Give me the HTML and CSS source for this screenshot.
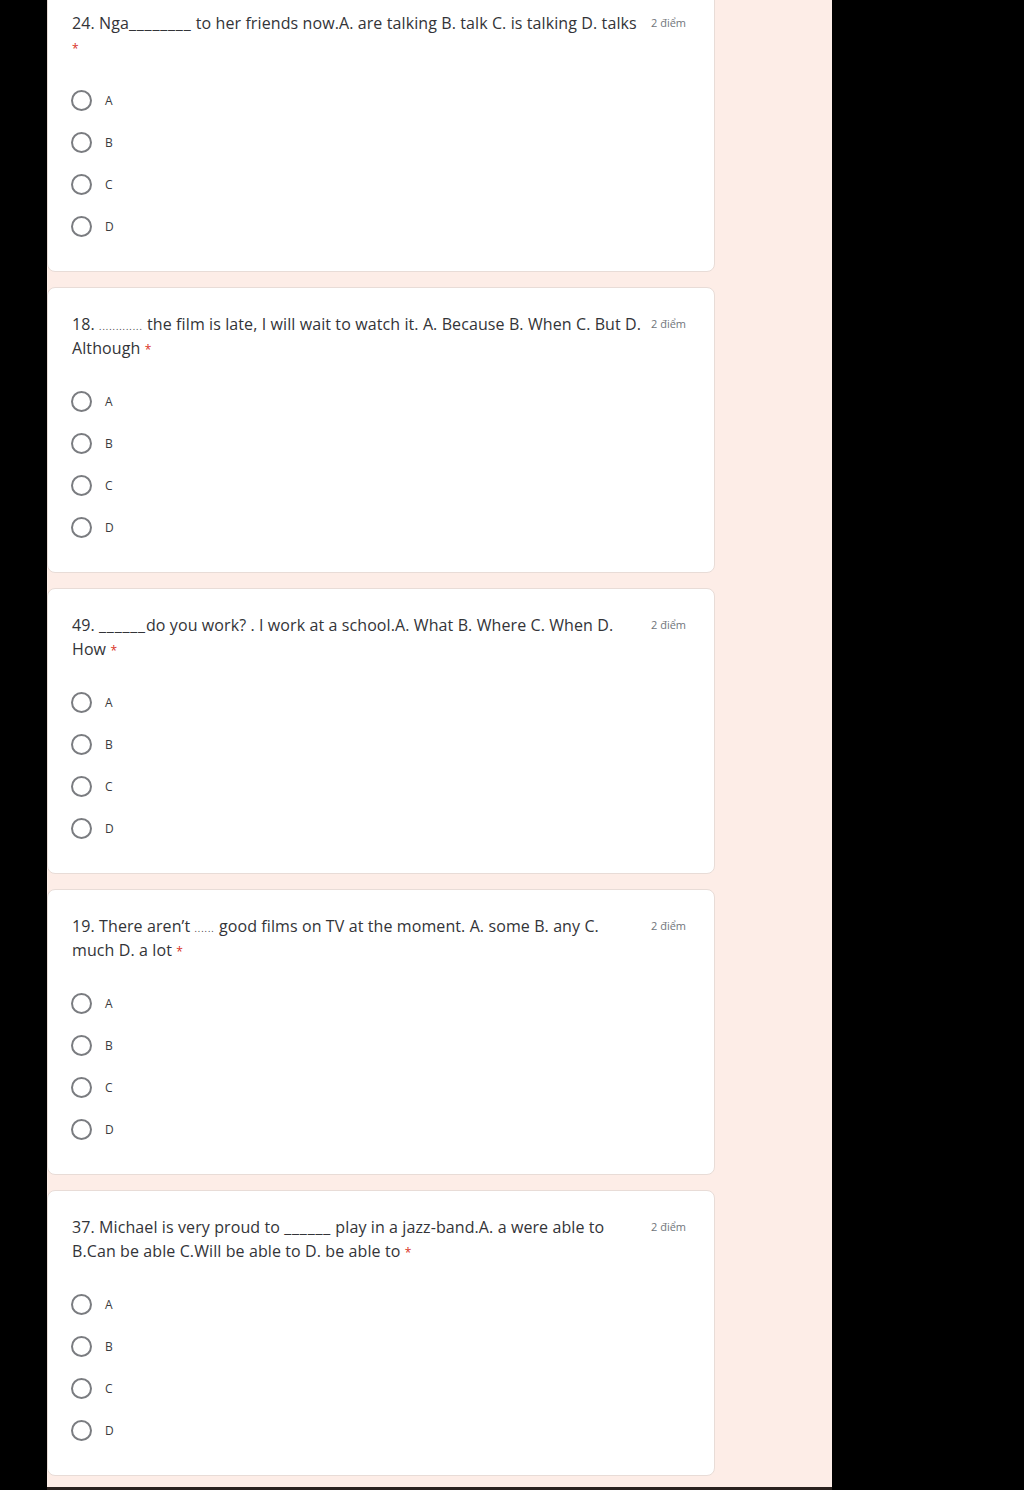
FILE: index.html
```html
<!DOCTYPE html>
<html lang="vi">
<head>
<meta charset="utf-8">
<title>Form</title>
<link rel="stylesheet" href="styles.css">
</head>
<body>
<div class="frame">
  <main class="page">
    <div class="list">
      <section class="card">
        <div class="head">
          <div class="title">24. Nga<span class="blank">________</span> to her friends now.A. are talking B. talk C. is talking D. talks<br><span class="req">*</span></div>
          <div class="pts">2 điểm</div>
        </div>
        <div class="opts">
          <label class="opt"><span class="radio"></span><span class="lbl">A</span></label>
          <label class="opt"><span class="radio"></span><span class="lbl">B</span></label>
          <label class="opt"><span class="radio"></span><span class="lbl">C</span></label>
          <label class="opt"><span class="radio"></span><span class="lbl">D</span></label>
        </div>
      </section>
      <section class="card">
        <div class="head">
          <div class="title">18. <span class="dots">.............</span> the film is late, I will wait to watch it. A. Because B. When C. But D.<br>Although <span class="req">*</span></div>
          <div class="pts">2 điểm</div>
        </div>
        <div class="opts">
          <label class="opt"><span class="radio"></span><span class="lbl">A</span></label>
          <label class="opt"><span class="radio"></span><span class="lbl">B</span></label>
          <label class="opt"><span class="radio"></span><span class="lbl">C</span></label>
          <label class="opt"><span class="radio"></span><span class="lbl">D</span></label>
        </div>
      </section>
      <section class="card">
        <div class="head">
          <div class="title">49. <span class="blank">______</span>do you work? . I work at a school.A. What B. Where C. When D.<br>How <span class="req">*</span></div>
          <div class="pts">2 điểm</div>
        </div>
        <div class="opts">
          <label class="opt"><span class="radio"></span><span class="lbl">A</span></label>
          <label class="opt"><span class="radio"></span><span class="lbl">B</span></label>
          <label class="opt"><span class="radio"></span><span class="lbl">C</span></label>
          <label class="opt"><span class="radio"></span><span class="lbl">D</span></label>
        </div>
      </section>
      <section class="card">
        <div class="head">
          <div class="title">19. There aren’t <span class="dots">......</span> good films on TV at the moment. A. some B. any C.<br>much D. a lot <span class="req">*</span></div>
          <div class="pts">2 điểm</div>
        </div>
        <div class="opts">
          <label class="opt"><span class="radio"></span><span class="lbl">A</span></label>
          <label class="opt"><span class="radio"></span><span class="lbl">B</span></label>
          <label class="opt"><span class="radio"></span><span class="lbl">C</span></label>
          <label class="opt"><span class="radio"></span><span class="lbl">D</span></label>
        </div>
      </section>
      <section class="card">
        <div class="head">
          <div class="title">37. Michael is very proud to <span class="blank">______</span> play in a jazz-band.A. a were able to<br>B.Can be able C.Will be able to D. be able to <span class="req">*</span></div>
          <div class="pts">2 điểm</div>
        </div>
        <div class="opts">
          <label class="opt"><span class="radio"></span><span class="lbl">A</span></label>
          <label class="opt"><span class="radio"></span><span class="lbl">B</span></label>
          <label class="opt"><span class="radio"></span><span class="lbl">C</span></label>
          <label class="opt"><span class="radio"></span><span class="lbl">D</span></label>
        </div>
      </section>
    </div>
  </main>
</div>
</body>
</html>
```
FILE: styles.css
```css
html, body {
  margin: 0;
  padding: 0;
  background: #000;
}
body {
  font-family: "Open Sans", "Liberation Sans", sans-serif;
  color: #202124;
}
.frame {
  height: 1490px;
  overflow: hidden;
  display: flex;
  flex-direction: column;
}
.page {
  margin-left: 47px;
  width: 785px;
  height: 1487px;
  background: #fdede7;
  overflow: hidden;
  border-bottom: 3px solid #2a211e;
}
.list {
  margin-top: -14px;
  display: flex;
  flex-direction: column;
  gap: 15px;
  width: 668px;
}
.card {
  box-sizing: border-box;
  height: 286px;
  background: #fff;
  border: 1px solid #e8dcd7;
  border-radius: 8px;
  padding: 24px 24px 0 24px;
}
.head {
  display: flex;
  align-items: flex-start;
  gap: 11px;
  min-height: 48px;
}
.title {
  flex: 1;
  min-width: 0;
  font-size: 16px;
  line-height: 24px;
  letter-spacing: 0.1px;
  color: #333438;
  white-space: nowrap;
}
.blank {
  letter-spacing: 0.8px;
}
.dots {
  font-size: 9px;
  line-height: 1;
  letter-spacing: 1px;
}
.req {
  color: #d93025;
  font-size: 12px;
  line-height: 1;
}
.pts {
  flex-shrink: 0;
  width: 39px;
  font-size: 11px;
  line-height: 24px;
  color: #70757a;
  white-space: nowrap;
}
.opts {
  margin-top: 20px;
  display: flex;
  flex-direction: column;
}
.opt {
  display: flex;
  align-items: center;
  height: 42px;
  gap: 13px;
}
.radio {
  box-sizing: border-box;
  width: 21px;
  height: 21px;
  border: 2px solid #7a7c80;
  border-radius: 50%;
  margin-left: -1px;
}
.lbl {
  font-size: 12px;
  color: #3a3b3e;
}
```
